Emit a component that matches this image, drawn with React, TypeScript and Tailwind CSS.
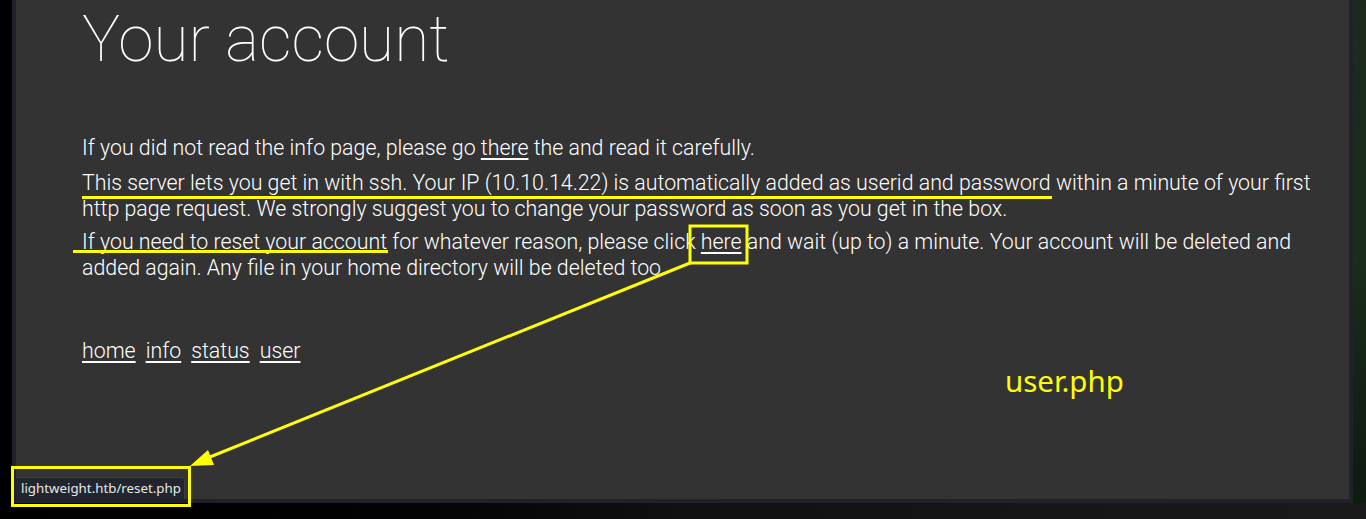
import React from "react";

export default function App() {
  return (
    <div className="relative w-[1366px] h-[519px] overflow-hidden bg-black" style={{ fontFamily: "Roboto, sans-serif" }}>
      <div className="flex h-[503px]">
        <div className="w-[12px] shrink-0 bg-black" />
        <div className="w-[1341px] shrink-0 border-4 border-t-0 border-[#1f222a] bg-[#333333] relative">
          <div className="pl-[66px] w-[1300px]">
            <h1 className="text-[64px] leading-[80px] font-thin text-white">Your account</h1>
            <div className="mt-[55px] text-[21.33px] leading-[26px] font-light text-white">
              <p className="mb-[9px]">If you did not read the info page, please go <a className="underline underline-offset-[3px]">there</a> the and read it carefully.</p>
              <p className="mb-[7px]">This server lets you get in with ssh. Your IP (10.10.14.22) is automatically added as userid and password within a minute of your first http page request. We strongly suggest you to change your password as soon as you get in the box.</p>
              <p>If you need to reset your account for whatever reason, please click <a className="underline underline-offset-[3px]">here</a> and wait (up to) a minute. Your account will be deleted and added again. Any file in your home directory will be deleted too.</p>
              <div className="mt-[57px] flex gap-[10px]">
                <a className="underline underline-offset-[3px]">home</a>
                <a className="underline underline-offset-[3px]">info</a>
                <a className="underline underline-offset-[3px]">status</a>
                <a className="underline underline-offset-[3px]">user</a>
              </div>
            </div>
          </div>
          <div className="absolute left-0 bottom-0 h-[22px] w-[169px] bg-[#22252d] border border-b-0 border-l-0 border-[#3a3d45] rounded-tr-[3px] flex items-center pl-[5px] text-[13.3px] text-[#e8e8e8]" style={{ fontFamily: '"Noto Sans", sans-serif' }}>
            lightweight.htb/reset.php
          </div>
        </div>
        <div className="flex-1 bg-gradient-to-b from-[#1c2a1c] via-[#1a2d1a] to-[#0f1a10]" />
      </div>
      <div className="h-[16px] bg-gradient-to-r from-black via-[#111] to-[#1a1a1a]" />

      {/* annotations */}
      <svg className="absolute left-0 top-0" width="1366" height="519" viewBox="0 0 1366 519">
        <line x1="82" y1="197.5" x2="1052" y2="197.5" stroke="#ffff00" strokeWidth="3" />
        <line x1="73" y1="251.5" x2="388" y2="251.5" stroke="#ffff00" strokeWidth="3" />
        <rect x="690" y="226" width="57" height="37" fill="none" stroke="#ffff00" strokeWidth="3" />
        <line x1="690" y1="263" x2="205" y2="459" stroke="#ffff00" strokeWidth="3" />
        <polygon points="190,466 208,450 214,465" fill="#ffff00" />
        <rect x="12.5" y="467.5" width="177" height="38" fill="none" stroke="#ffff00" strokeWidth="3" />
      </svg>
      <div className="absolute left-[1005px] top-[361px] text-[29.5px] leading-[40px] text-[#ffff00]" style={{ fontFamily: '"Noto Sans", sans-serif' }}>user.php</div>
    </div>
  );
}
